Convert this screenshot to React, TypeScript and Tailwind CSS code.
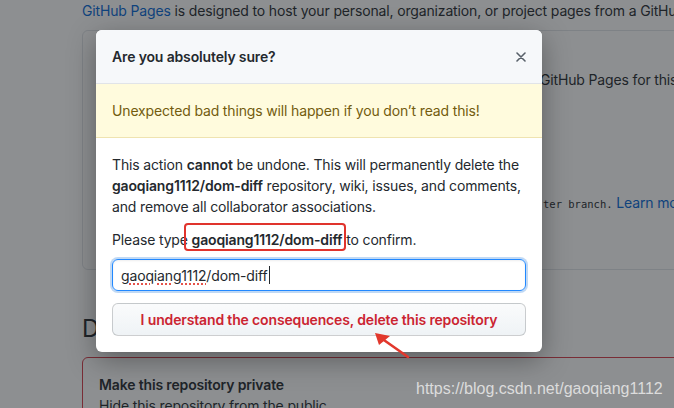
import { useState } from 'react';

const repo = 'gaoqiang1112/dom-diff';

function CloseIcon() {
  return (
    <svg width="10" height="10" viewBox="0 0 10 10" className="text-[#586069]">
      <path d="M1 1L9 9M9 1L1 9" stroke="currentColor" strokeWidth="1.6" strokeLinecap="round" />
    </svg>
  );
}

function BackgroundPage() {
  return (
    <div className="pl-[82px] text-sm leading-[21px] text-[#24292e]">
      <p className="whitespace-nowrap">
        <a className="text-[#0366d6]">GitHub Pages</a> is designed to host your personal, organization, or project pages from a GitHub repository.
      </p>

      <div className="mt-[9px] w-[700px] border border-[#e1e4e8] rounded-md px-4 pt-[14px] pb-[14px]">
        <h3 className="text-base font-semibold leading-6">Source</h3>
        <p className="whitespace-nowrap">
          <span className="inline-block w-[441px] overflow-hidden align-top">GitHub Pages is currently disabled. Select a source below to enable</span>
          GitHub Pages for this repository.
        </p>
        <div className="mt-[10px] h-8 w-[120px] rounded-md border border-[#d1d5da] bg-[#fafbfc]" />
        <h3 className="mt-[36px] text-base font-semibold leading-6">Theme chooser</h3>
        <p className="whitespace-nowrap">
          <span className="inline-block w-[444px] overflow-hidden align-top">Select a theme to publish your site with a Jekyll theme using the</span>
          <span className="font-['DejaVu_Sans_Mono',monospace] text-[10.5px] tracking-normal">ter branch.</span>{' '}
          <a className="text-[#0366d6]">Learn more.</a>
        </p>
        <div className="mt-[10px] h-[30px] w-[130px] rounded-md border border-[#d1d5da] bg-[#fafbfc]" />
      </div>

      <h2 className="mt-[44px] mb-[13px] text-2xl leading-[30px] font-normal">Danger Zone</h2>

      <div className="w-[700px] border border-[#d73a49] rounded-md p-4">
        <p className="font-semibold">Make this repository private</p>
        <p>Hide this repository from the public.</p>
      </div>
    </div>
  );
}

function ConfirmDialog() {
  const [value] = useState(repo);

  return (
    <div className="absolute left-[96px] top-[30px] w-[446px] rounded-md bg-white shadow-[0_8px_28px_rgba(0,0,0,0.35)] text-sm leading-[21px] text-[#24292e]">
      <div className="flex h-[54px] items-center justify-between rounded-t-md border-b border-[#e1e4e8] bg-[#f6f8fa] pl-4 pr-4">
        <h3 className="text-sm font-semibold">Are you absolutely sure?</h3>
        <CloseIcon />
      </div>

      <div className="flex h-[54px] items-center border-b border-[rgba(176,136,0,0.2)] bg-[#fffbdd] px-4 text-[#735c0f]">
        Unexpected bad things will happen if you don’t read this!
      </div>

      <div className="px-4 pt-4 pb-4">
        <p className="mb-[12px] whitespace-nowrap">
          This action <strong className="font-semibold">cannot</strong> be undone. This will permanently delete the
          <br />
          <strong className="font-semibold">{repo}</strong> repository, wiki, issues, and comments,
          <br />
          and remove all collaborator associations.
        </p>
        <p className="mb-[9px]">
          Please type{' '}
          <span className="relative">
            <strong className="font-semibold">{repo}</strong>
            <span className="absolute -left-[8px] -right-[4px] -top-[8px] -bottom-[3px] rounded-[4px] border-2 border-[#e0342d]" />
          </span>{' '}
          to confirm.
        </p>

        <div className="flex h-8 items-center rounded-md border border-[#2188ff] px-2 shadow-[inset_0_1px_2px_rgba(27,31,35,0.075),0_0_0_2px_rgba(3,102,214,0.25)]">
          <span className="underline decoration-dotted decoration-[#e5534b] decoration-2 underline-offset-[3px]">gaoqiang1112</span>
          <span>{value.slice(12)}</span>
          <span className="ml-px h-[18px] w-px bg-[#24292e]" />
        </div>

        <button className="mt-3 flex h-[33px] w-full items-center justify-center rounded-md border border-[rgba(27,31,35,0.2)] bg-gradient-to-b from-[#fafbfc] to-[#eff3f6] text-sm font-semibold text-[#cb2431]">
          I understand the consequences, delete this repository
        </button>
      </div>
    </div>
  );
}

export default function App() {
  return (
    <div className="relative h-[408px] w-[674px] overflow-hidden bg-white font-['Inter','Noto_Sans',sans-serif] tracking-[-0.15px]">
      <BackgroundPage />
      <div className="absolute inset-0 bg-[rgba(27,31,35,0.5)]" />
      <ConfirmDialog />

      <svg className="absolute left-[368px] top-[328px]" width="48" height="36" viewBox="0 0 48 36">
        <path d="M13 10L40 29" stroke="#e2382d" strokeWidth="2.6" strokeLinecap="round" />
        <path d="M7 5L22 8L11 17Z" fill="#e2382d" />
      </svg>

      <div className="absolute left-[416px] top-[378px] font-['Liberation_Sans',Arial,sans-serif] text-base leading-[22px] tracking-normal text-[#dcdcdc]">
        https://blog.csdn.net/gaoqiang1112
      </div>
    </div>
  );
}
